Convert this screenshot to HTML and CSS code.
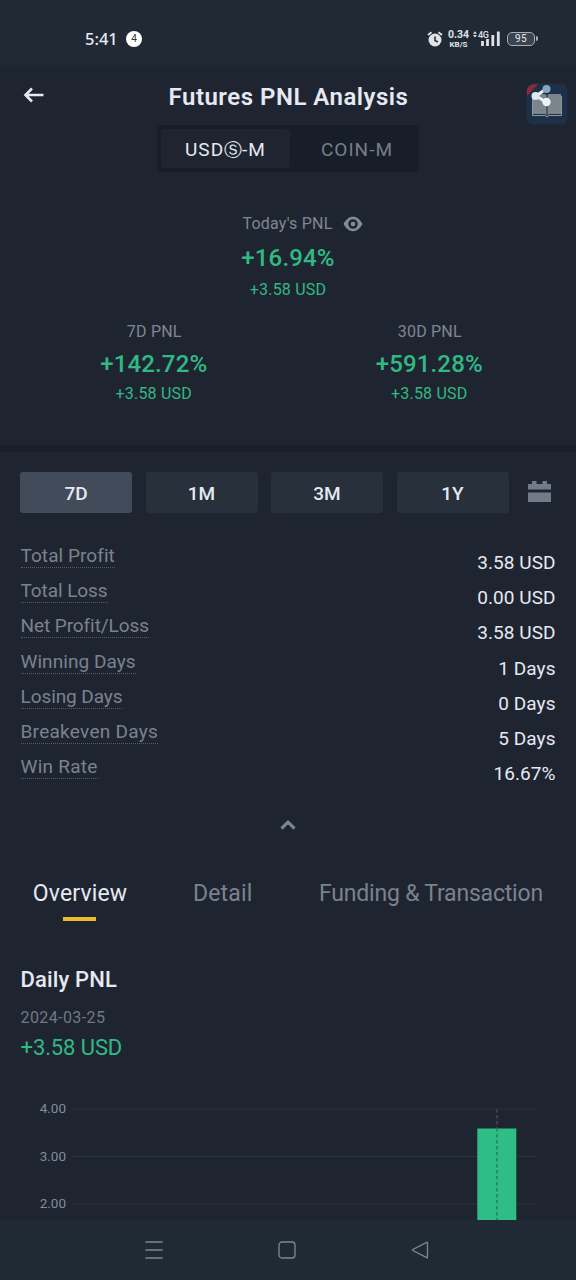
FILE: index.html
```html
<!DOCTYPE html>
<html lang="en">
<head>
<meta charset="utf-8">
<title>Futures PNL Analysis</title>
<link rel="stylesheet" href="styles.css">
</head>
<body>
<div class="screen">
  <div class="status">
    <span class="clock">5:41</span><span class="notif">4</span>
    <svg class="alarm" width="16" height="18" viewBox="0 0 16 18"><circle cx="8" cy="10" r="6.500" fill="#dfe3e8"/><path d="M1 5 4.500 2.200M15 5 11.500 2.200" stroke="#dfe3e8" stroke-width="1.800"/><path d="M8 6.500v4l2.800 1.500" fill="none" stroke="#202934" stroke-width="1.500"/></svg>
    <span class="speed"><b>0.34</b><small>KB/S</small></span>
    <svg class="signal" width="28" height="18" viewBox="0 0 28 18"><path d="M0 5 2.300 2 4.600 5ZM0 6.500 2.300 9.500 4.600 6.500Z" fill="#dfe3e8" transform="translate(0 .5) scale(.85)"/><text x="5" y="8.500" class="net">4G</text><path d="M9.500 12v5M14.500 10v7M19.800 6v11M25.300 2.500v14.500" stroke="#dfe3e8" stroke-width="2.800"/></svg>
    <span class="battery">95</span>
  </div>

  <header class="header">
    <svg class="back" width="22" height="18" viewBox="0 0 22 18"><path d="M20.500 9H2.500M9 2.500 2.500 9 9 15.500" fill="none" stroke="#e6e9f2" stroke-width="2.600"/></svg>
    <h1>Futures PNL Analysis</h1>
    <svg class="share" width="42" height="42" viewBox="0 0 42 42"><rect x=".5" y=".5" width="41" height="41" rx="7" fill="#1c3148"/><path d="M1 13V7Q2 2 8 1h4Z" fill="#8c2a3b"/><path d="M7 11h12l2 1.500L23 11h12v20H23l-2 2-2-2H7Z" fill="#7e848c"/><path d="M6.500 13v19.500h12.500l2 1.500 2-1.500h12.500V13" fill="none" stroke="#8f979f"/><path d="M21 12v21" stroke="#2b3c50" stroke-width="1.200"/><path d="M20 6 10 13l10 6" fill="none" stroke="#e8f2fa" stroke-width="3"/><circle cx="20.500" cy="6" r="4" fill="#86a4bd"/><circle cx="9.500" cy="13" r="4" fill="#dfe8ef"/><circle cx="20.500" cy="19" r="4.200" fill="#e8f4fb"/></svg>
  </header>

  <div class="segment"><span class="seg on">USD<i>Ⓢ</i>-M</span><span class="seg">COIN-M</span></div>

  <section class="today">
    <div class="label eye-row"><span>Today's PNL</span><svg width="20" height="16" viewBox="0 0 20 16"><path fill-rule="evenodd" fill="#848b99" d="M.5 8C3 3.500 6 .8 10 .8S17 3.500 19.500 8C17 12.500 14 15.200 10 15.200S3 12.500 .5 8ZM10 3.200a4.800 4.800 0 1 0 0 9.600 4.800 4.800 0 0 0 0-9.600Z"/><circle cx="10" cy="8" r="2.300" fill="#848b99"/></svg></div>
    <div class="pct">+16.94%</div>
    <div class="usd">+3.58 USD</div>
  </section>
  <section class="periods">
    <div><div class="label">7D PNL</div><div class="pct">+142.72%</div><div class="usd">+3.58 USD</div></div>
    <div><div class="label">30D PNL</div><div class="pct">+591.28%</div><div class="usd">+3.58 USD</div></div>
  </section>

  <div class="ranges">
    <span class="range on">7D</span><span class="range">1M</span><span class="range">3M</span><span class="range">1Y</span>
    <svg class="calendar" width="23" height="22" viewBox="0 0 23 22"><path d="M0 3h4V0h4.500v3h6V0H19v3h4v5.500H0ZM0 11.500h23V21H0Z" fill="#747b88"/></svg>
  </div>

  <div class="stats">
    <div class="row"><span class="name">Total Profit</span><span class="value">3.58 USD</span></div>
    <div class="row"><span class="name tight">Total Loss</span><span class="value">0.00 USD</span></div>
    <div class="row"><span class="name tight">Net Profit/Loss</span><span class="value">3.58 USD</span></div>
    <div class="row"><span class="name">Winning Days</span><span class="value">1 Days</span></div>
    <div class="row"><span class="name tight">Losing Days</span><span class="value">0 Days</span></div>
    <div class="row"><span class="name wide">Breakeven Days</span><span class="value">5 Days</span></div>
    <div class="row"><span class="name wide">Win Rate</span><span class="value">16.67%</span></div>
  </div>

  <div class="collapse"><svg width="16" height="12" viewBox="0 0 16 12"><path d="M1.500 9.500 8 3.200l6.500 6.300" fill="none" stroke="#7d8491" stroke-width="3.200"/></svg></div>

  <nav class="tabs"><span class="tab on">Overview</span><span class="tab detail">Detail</span><span class="tab funding">Funding &amp; Transaction</span></nav>

  <section class="daily">
    <h2>Daily PNL</h2>
    <div class="date">2024-03-25</div>
    <div class="amount">+3.58 USD</div>
  </section>
  <svg class="chart" width="576" height="130" viewBox="0 0 576 130">
    <path d="M72 19h464M72 66.500h464M72 114h464" stroke="#2a323c" stroke-width="1"/>
    <text x="66" y="22.500">4.00</text><text x="66" y="70.500">3.00</text><text x="66" y="118">2.00</text>
    <rect x="477.300" y="38.500" width="39" height="91.500" fill="#2ebd85"/>
    <path d="M497 19v19" stroke="#59616b" stroke-dasharray="3.500 2.500"/>
    <path d="M497 38v92" stroke="#24755a" stroke-width="1.300" stroke-dasharray="3.500 2.500"/>
  </svg>

  <div class="navbar">
    <svg width="18" height="18" viewBox="0 0 18 18"><path d="M.5 1h17M.5 9h17M.5 17h17"/></svg>
    <svg width="18" height="18" viewBox="0 0 18 18"><rect x="1" y="1" width="16" height="16" rx="3"/></svg>
    <svg width="18" height="18" viewBox="0 0 18 18"><path d="M16.500 1.800v14.400q0 .8-.8.400L1.800 9.500q-.6-.5 0-1L15.700 1.400q.8-.4.800.4Z"/></svg>
  </div>
</div>
</body>
</html>
```
FILE: styles.css
```css
* { box-sizing: border-box; }
body { margin: 0; background: #1f2530; font-family: Roboto, "Noto Sans", sans-serif; color: #e6e9f2; }
h1, h2 { margin: 0; font-weight: 500; }
svg { display: block; flex: none; }
.screen { width: 576px; height: 1280px; display: flex; flex-direction: column; overflow: hidden; }
.screen > * { flex: none; }

.status { height: 65px; background: #202934; display: flex; align-items: center; padding: 12px 41px 0 85px; }
.clock { font: 500 16.500px/20px "Noto Sans", sans-serif; width: 41px; }
.notif { width: 16px; height: 16px; border-radius: 50%; background: #fff; color: #333; font-size: 10px; line-height: 16px; text-align: center; }
.alarm { margin: 0 0 0 auto; position: relative; left: -2px; }
.speed { width: 23px; margin: 0 3px 0 2px; display: flex; flex-direction: column; align-items: center; color: #dfe3e8; }
.speed b { font: 700 10.500px/11px Roboto, sans-serif; }
.speed small { font: 700 8px/9px Roboto, sans-serif; }
.signal { margin-top: -2px; }
.net { font: 500 9px Roboto, sans-serif; fill: #dfe3e8; letter-spacing: -.3px; }
.battery { position: relative; margin-left: 6px; width: 28px; height: 14px; border: 1.500px solid #a7adb6; border-radius: 5px; background: #3b434e; font-size: 10px; line-height: 12px; letter-spacing: .5px; text-align: center; }
.battery::after { content: ""; position: absolute; right: -4px; top: 3px; width: 2px; height: 5px; border-radius: 0 2px 2px 0; background: #a7adb6; }

.header { height: 60px; display: grid; grid-template-columns: 49px 1fr 49px; padding: 0 8px 0 0; align-items: center; }
.back { margin-left: 23px; }
.header h1 { font-size: 24px; line-height: 30px; font-weight: 600; letter-spacing: .5px; text-align: center; padding: 4px 0 0 9px; }
.share { margin: 17px 0 0 7px; }

.segment { width: 262px; height: 47px; margin: 0 auto; padding: 4px; background: #181e28; border-radius: 4px; display: flex; }
.seg { flex: none; width: 134px; line-height: 41px; height: 39px; text-align: center; font-size: 19px; letter-spacing: 1px; color: #777e8a; }
.seg.on { width: 129px; background: #1f2530; border-radius: 4px; color: #e6e9f2; }
.seg i { font: 18px "DejaVu Sans", sans-serif; line-height: 20px; letter-spacing: 0; }

.today { margin-top: 42px; text-align: center; }
.label { font-size: 16px; line-height: 20px; letter-spacing: .2px; padding: 1px 0 0 1px; margin-bottom: -1px; color: #7f8694; text-align: center; }
.label.eye-row { display: flex; justify-content: center; gap: 11px; padding: 0 0 0 30px; margin: 0; align-items: center; }
.pct { margin-top: 10px; font-size: 24px; line-height: 28px; font-weight: 500; letter-spacing: .15px; color: #31b984; text-align: center; }
.usd { margin-top: 7px; font-size: 16px; line-height: 21px; letter-spacing: .2px; color: #31b984; text-align: center; }
.periods { margin-top: 21px; height: 124px; padding: 0 9px 0 16px; display: grid; grid-template-columns: 1fr 1fr; }
.periods .pct { margin-top: 9px; }
.periods .usd { margin-top: 5px; }

.ranges { border-top: 7px solid #1a1f2a; padding: 20px 25px 0 20px; height: 100px; display: flex; gap: 13.500px; }
.range { width: 112px; height: 41px; border-radius: 3px; background: #28303b; text-align: center; font-size: 19px; line-height: 43px; font-weight: 500; }
.range.on { background: #414b59; }
.calendar { margin: 9px 0 0 6px; }

.stats { padding: 0 20.500px; }
.row { height: 35.200px; display: flex; justify-content: space-between; align-items: flex-start; }
.name { font-size: 19px; line-height: 22px; letter-spacing: .06px; color: #7b828f; border-bottom: 1px dotted #565d69; }
.name.tight { letter-spacing: -.08px; }
.name.wide { letter-spacing: .27px; }
.value { margin-top: 7px; font-size: 19px; line-height: 22px; letter-spacing: .06px; }

.collapse { height: 67.600px; padding-top: 28px; display: flex; justify-content: center; }

.tabs { height: 104px; padding: 21px 0 0 33px; display: flex; font-size: 23px; line-height: 28px; color: #7b828f; }
.tab { white-space: nowrap; letter-spacing: .15px; }
.tab.on { color: #e6e9f2; width: 94px; margin-right: 66px; display: flex; flex-direction: column; align-items: center; }
.tab.on::after { content: ""; width: 33px; height: 4px; background: #f0b92b; margin: 9px 1px 0 0; }
.tab.detail { width: 126px; }
.tab.funding { letter-spacing: -.2px; }

.daily { height: 127px; padding-left: 20.500px; }
.daily h2 { font-size: 22px; line-height: 26px; letter-spacing: .15px; margin-top: 4px; }
.date { font-size: 16px; line-height: 21px; margin-top: 14px; color: #717885; letter-spacing: .4px; }
.amount { font-size: 22px; line-height: 26px; margin-top: 7px; color: #31b984; letter-spacing: -.1px; }
.chart text { font-size: 13.500px; fill: #858c98; text-anchor: end; }
.navbar { height: 60px; background: #202a35; display: flex; gap: 115px; padding: 21px 0 0 145px; }
.navbar svg { fill: none; stroke: #7f8792; stroke-width: 1.300; }
```
